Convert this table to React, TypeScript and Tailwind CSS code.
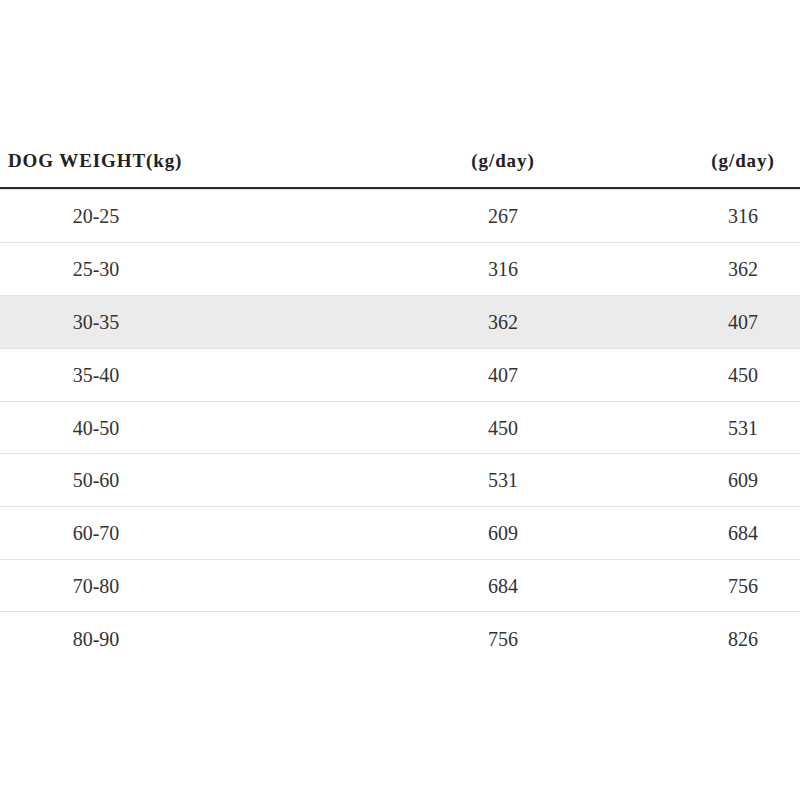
const rows = [
  ["20-25", "267", "316"],
  ["25-30", "316", "362"],
  ["30-35", "362", "407"],
  ["35-40", "407", "450"],
  ["40-50", "450", "531"],
  ["50-60", "531", "609"],
  ["60-70", "609", "684"],
  ["70-80", "684", "756"],
  ["80-90", "756", "826"],
];

const gridClass = "grid grid-cols-[192px_252px_118px_124px_114px]";

export default function App() {
  return (
    <div className="min-h-[800px] w-[800px] bg-white pt-[136px] font-['Liberation_Serif',serif]">
      <div
        className={`${gridClass} h-[53px] items-center border-b-2 border-[#2a2a2a] text-[19px] font-bold tracking-[0.9px] text-[#222]`}
      >
        <div className="col-span-2 pl-2">DOG WEIGHT(kg)</div>
        <div className="text-center">(g/day)</div>
        <div />
        <div className="text-center">(g/day)</div>
      </div>
      <div className="border-t border-[#e2e2e2]">
        {rows.map(([weight, a, b], i) => (
          <div
            key={weight}
            className={`${gridClass} items-center text-[20px] text-[#333] ${
              i === 4 || i === 7 ? "h-[52px]" : "h-[53px]"
            } ${i < rows.length - 1 ? "border-b border-[#e2e2e2]" : ""} ${
              i === 2 ? "bg-[#ebebeb]" : ""
            }`}
          >
            <div className="text-center">{weight}</div>
            <div />
            <div className="text-center">{a}</div>
            <div />
            <div className="text-center">{b}</div>
          </div>
        ))}
      </div>
    </div>
  );
}
